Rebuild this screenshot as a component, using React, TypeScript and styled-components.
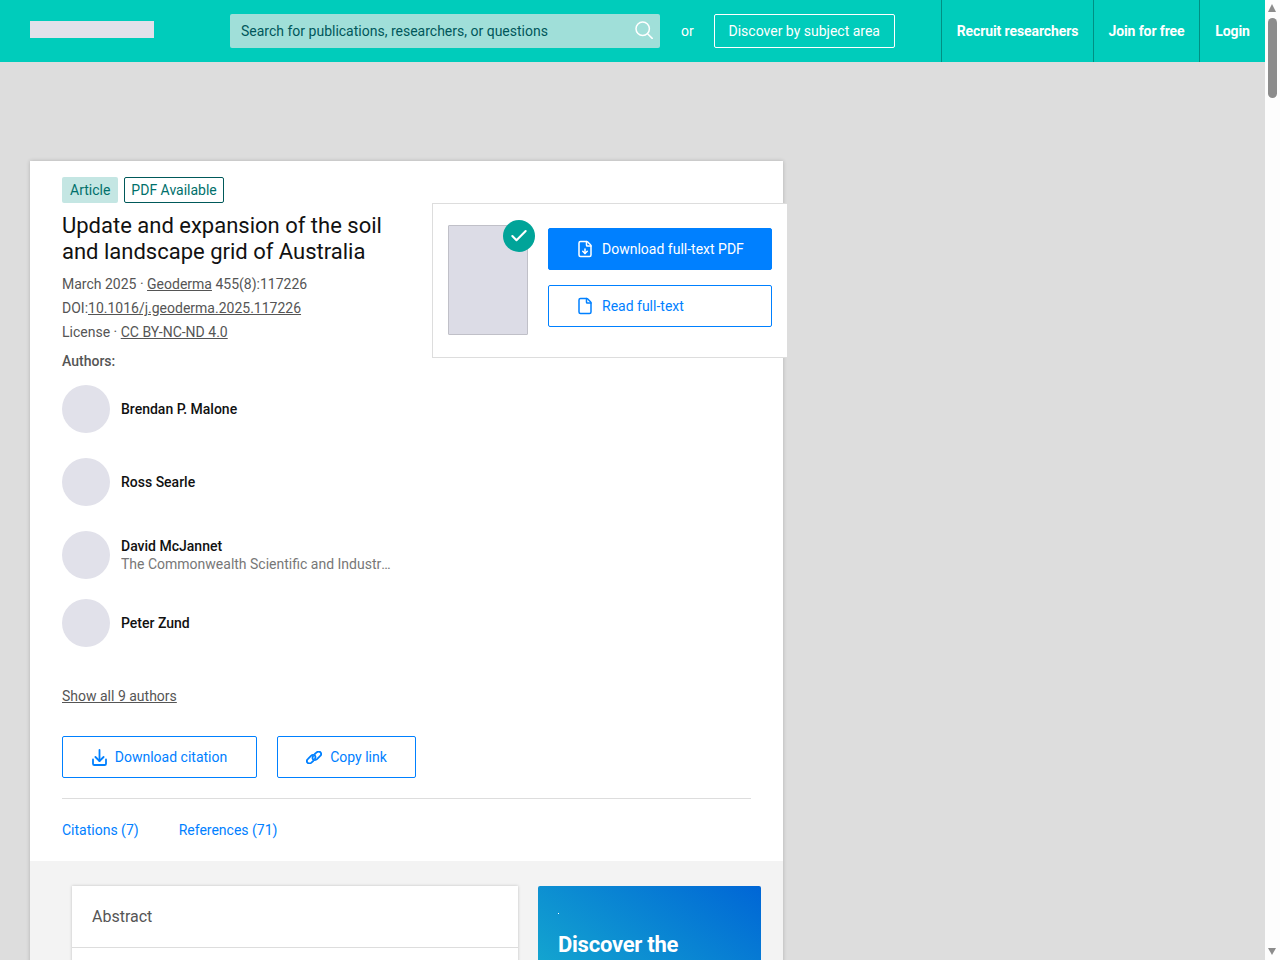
import React, { ReactElement } from 'react';
import styled, { createGlobalStyle } from 'styled-components';
import { Check, File, FileDown } from 'lucide-react';

const GlobalStyle = createGlobalStyle`
	html, body {
		margin: 0;
		padding: 0;
		background: #dddddd;
		font-family: Roboto, "Liberation Sans", sans-serif;
		font-size: 14px;
		color: #555555;
	}
	* {
		box-sizing: border-box;
	}
`;

const AUTHORS = [
	{ name: 'Brendan P. Malone', after: 25 },
	{ name: 'Ross Searle', after: 25 },
	{ name: 'David McJannet', org: 'The Commonwealth Scientific and Industrial Research Organisation', after: 20 },
	{ name: 'Peter Zund', after: 0 },
];

const SearchGlyph = (): ReactElement => (
	<svg width="18" height="18" viewBox="0 0 18 18" fill="none" stroke="#ffffff" strokeWidth="1.5" strokeLinecap="round">
		<circle cx="7.7" cy="7.7" r="6.7" />
		<path d="M12.6 12.8 17.2 17.4" />
	</svg>
);

const DownloadGlyph = (): ReactElement => (
	<svg width="15" height="17" viewBox="0 0 15 17" fill="none" stroke="currentColor" strokeWidth="1.8" strokeLinecap="round" strokeLinejoin="round">
		<path d="M7.5 1v11" />
		<path d="M3.4 8 7.5 12 11.6 8" />
		<path d="M1 10.5v4.2c0 .8.5 1.3 1.3 1.3h10.4c.8 0 1.3-.5 1.3-1.3v-4.2" />
	</svg>
);

const LinkChain = (): ReactElement => (
	<svg width="16" height="13" viewBox="0 0 16 13" fill="none" stroke="currentColor" strokeWidth="1.8" strokeLinecap="round">
		<path d="M7.2 10 5.4 11.6c-1.3 1-3 1-3.9 0-.9-1-.7-2.7.5-3.8l3-2.9c1.3-1.2 3-1.3 3.9-.3.7.8.7 2 .1 3" />
		<path d="M8.8 3 10.6 1.4c1.3-1 3-1 3.9 0 .9 1 .7 2.7-.5 3.8l-3 2.9c-1.3 1.2-3 1.3-3.9.3-.7-.8-.7-2-.1-3" />
	</svg>
);

export default function App(): ReactElement {
	return (
		<Page>
			<GlobalStyle />
			<TopBar>
				<LogoBlock />
				<SearchBox>
					<SearchText>Search for publications, researchers, or questions</SearchText>
					<SearchIconSlot>
						<SearchGlyph />
					</SearchIconSlot>
				</SearchBox>
				<OrLabel>or</OrLabel>
				<SubjectButton>Discover by subject area</SubjectButton>
				<NavLinks>
					<NavLink $width={152}>Recruit researchers</NavLink>
					<NavLink $width={106}>Join for free</NavLink>
					<NavLink $width={66}>Login</NavLink>
				</NavLinks>
			</TopBar>

			<Card>
				<CardHead>
					<TagRow>
						<ArticleTag>Article</ArticleTag>
						<PdfTag>PDF Available</PdfTag>
					</TagRow>
					<Title>Update and expansion of the soil and landscape grid of Australia</Title>
					<Meta>
						March 2025 · <MetaLink>Geoderma</MetaLink> 455(8):117226
					</Meta>
					<Meta>
						DOI:<MetaLink>10.1016/j.geoderma.2025.117226</MetaLink>
					</Meta>
					<Meta>
						License · <MetaLink>CC BY-NC-ND 4.0</MetaLink>
					</Meta>
					<AuthorsLabel>Authors:</AuthorsLabel>
					<AuthorList>
						{AUTHORS.map((a) => (
							<AuthorRow key={a.name} $after={a.after}>
								<Avatar />
								<AuthorInfo>
									<AuthorName>{a.name}</AuthorName>
									{a.org && <AuthorOrg>{a.org}</AuthorOrg>}
								</AuthorInfo>
							</AuthorRow>
						))}
					</AuthorList>
					<ShowAll>Show all 9 authors</ShowAll>
					<ActionRow>
						<OutlineButton $width={195}>
							<DownloadGlyph />
							Download citation
						</OutlineButton>
						<OutlineButton $width={139}>
							<LinkChain />
							Copy link
						</OutlineButton>
					</ActionRow>
					<Divider />
					<Tabs>
						<Tab>Citations (7)</Tab>
						<Tab>References (71)</Tab>
					</Tabs>
				</CardHead>

				<FloatBox>
					<Thumb>
						<CheckBadge>
							<Check size={20} strokeWidth={2.5} color="#ffffff" />
						</CheckBadge>
					</Thumb>
					<FloatActions>
						<PrimaryButton>
							<FileDown size={18} strokeWidth={2} />
							Download full-text PDF
						</PrimaryButton>
						<SecondaryButton>
							<File size={18} strokeWidth={2} />
							Read full-text
						</SecondaryButton>
					</FloatActions>
				</FloatBox>

				<CardBody>
					<AbstractCard>
						<AbstractHead>Abstract</AbstractHead>
					</AbstractCard>
					<Promo>
						<PromoDot />
						<PromoTitle>Discover the world's research</PromoTitle>
					</Promo>
				</CardBody>
			</Card>

			<ScrollRail>
				<ScrollUp />
				<ScrollThumb />
				<ScrollDown />
			</ScrollRail>
		</Page>
	);
}

const Page = styled.div`
	min-height: 960px;
	margin-right: 15px;
`;

const TopBar = styled.header`
	height: 62px;
	display: flex;
	align-items: center;
	padding-left: 30px;
	background: #00ccbb;
`;

const LogoBlock = styled.div`
	width: 124px;
	height: 17px;
	margin-bottom: 3px;
	background: #e1e1ea;
`;

const SearchBox = styled.div`
	width: 430px;
	height: 34px;
	margin-left: 76px;
	padding: 0 7px 0 11px;
	display: flex;
	align-items: center;
	justify-content: space-between;
	background: #a0dfd9;
	border-radius: 2px;
`;

const SearchText = styled.span`
	color: #00575b;
	font-size: 14px;
`;

const SearchIconSlot = styled.span`
	display: flex;
	margin-bottom: 2px;
`;

const OrLabel = styled.span`
	margin-left: 21px;
	color: #ffffff;
`;

const SubjectButton = styled.button`
	width: 181px;
	height: 34px;
	margin-left: 20px;
	padding: 0;
	background: transparent;
	border: 1px solid #ffffff;
	border-radius: 2px;
	color: #ffffff;
	font: 400 14px Roboto, sans-serif;
`;

const NavLinks = styled.nav`
	height: 62px;
	margin-left: auto;
	display: flex;
`;

const NavLink = styled.a<{ $width: number }>`
	width: ${({ $width }): number => $width}px;
	display: flex;
	align-items: center;
	justify-content: center;
	border-left: 1px solid #008f83;
	color: #ffffff;
	font-weight: 700;
	letter-spacing: -0.1px;
`;

const Card = styled.main`
	position: relative;
	width: 753px;
	margin: 99px 0 0 30px;
	background: #f3f3f3;
	box-shadow: 0 0 4px rgba(0, 0, 0, 0.2);
`;

const CardHead = styled.section`
	padding: 16px 32px 0;
	background: #ffffff;
`;

const TagRow = styled.div`
	display: flex;
	gap: 6px;
`;

const ArticleTag = styled.span`
	height: 26px;
	padding: 0 8px;
	display: flex;
	align-items: center;
	background: #c4e6e3;
	border-radius: 2px;
	color: #00706b;
`;

const PdfTag = styled(ArticleTag)`
	padding: 0 6px;
	background: #ffffff;
	border: 1px solid #00595a;
`;

const Title = styled.h1`
	width: 340px;
	margin: 10px 0 7px;
	color: #111111;
	font-size: 22px;
	font-weight: 400;
	line-height: 26px;
`;

const Meta = styled.div`
	height: 24px;
	line-height: 24px;
`;

const MetaLink = styled.a`
	text-decoration: underline;
`;

const AuthorsLabel = styled.div`
	margin-top: 5px;
	font-weight: 500;
	line-height: 24px;
`;

const AuthorList = styled.div`
	margin-top: 12px;
`;

const AuthorRow = styled.div<{ $after: number }>`
	display: flex;
	align-items: center;
	gap: 11px;
	margin-bottom: ${({ $after }): number => $after}px;
`;

const Avatar = styled.div`
	width: 48px;
	height: 48px;
	border-radius: 50%;
	background: #e1e1ea;
`;

const AuthorInfo = styled.div`
	width: 270px;
	line-height: 18px;
`;

const AuthorName = styled.div`
	color: #111111;
	font-weight: 500;
`;

const AuthorOrg = styled.div`
	overflow: hidden;
	color: #777777;
	white-space: nowrap;
	text-overflow: ellipsis;
`;

const ShowAll = styled.a`
	display: block;
	margin-top: 40px;
	line-height: 18px;
	text-decoration: underline;
`;

const ActionRow = styled.div`
	display: flex;
	gap: 20px;
	margin-top: 31px;
`;

const OutlineButton = styled.button<{ $width: number }>`
	width: ${({ $width }): number => $width}px;
	height: 42px;
	padding: 0;
	display: flex;
	align-items: center;
	justify-content: center;
	gap: 8px;
	background: #ffffff;
	border: 1px solid #0080ff;
	border-radius: 2px;
	color: #0080ff;
	font: 400 14px Roboto, sans-serif;
`;

const Divider = styled.hr`
	height: 1px;
	margin: 20px 0 0;
	background: #dddddd;
	border: 0;
`;

const Tabs = styled.div`
	position: relative;
	z-index: 1;
	height: 62px;
	margin: 0 17px -2px -20px;
	padding: 22px 0 0 20px;
	display: flex;
	gap: 40px;
	background: #ffffff;
`;

const Tab = styled.a`
	color: #0080ff;
	line-height: 18px;
`;

const FloatBox = styled.aside`
	position: absolute;
	top: 42px;
	left: 402px;
	width: 356px;
	height: 155px;
	padding: 21px 15px 0;
	display: flex;
	gap: 20px;
	background: #ffffff;
	border: 1px solid #dddddd;
`;

const Thumb = styled.div`
	position: relative;
	width: 81px;
	height: 110px;
	background: #dcdce6;
	border: 1px solid #c0c0c8;
	border-radius: 1px;
`;

const CheckBadge = styled.span`
	position: absolute;
	top: -6px;
	right: -8px;
	width: 32px;
	height: 32px;
	display: flex;
	align-items: center;
	justify-content: center;
	background: #00a499;
	border-radius: 50%;
`;

const FloatActions = styled.div`
	padding-top: 3px;
	display: flex;
	flex-direction: column;
	gap: 15px;
`;

const PrimaryButton = styled.button`
	width: 224px;
	height: 42px;
	padding: 0 0 0 27px;
	display: flex;
	align-items: center;
	gap: 8px;
	background: #0080ff;
	border: 1px solid #0080ff;
	border-radius: 2px;
	color: #ffffff;
	font: 400 14px Roboto, sans-serif;
`;

const SecondaryButton = styled(PrimaryButton)`
	background: #ffffff;
	color: #0080ff;
`;

const CardBody = styled.section`
	height: 400px;
	padding: 27px 22px 0 42px;
	display: flex;
	gap: 20px;
`;

const AbstractCard = styled.article`
	width: 446px;
	height: 300px;
	background: #ffffff;
	box-shadow: 0 0 3px rgba(0, 0, 0, 0.2);
`;

const AbstractHead = styled.h2`
	height: 62px;
	margin: 0;
	padding-left: 20px;
	display: flex;
	align-items: center;
	border-bottom: 1px solid #dddddd;
	font-size: 16px;
	font-weight: 400;
`;

const Promo = styled.article`
	width: 223px;
	height: 300px;
	padding: 27px 20px 0;
	background: linear-gradient(215deg, #0066d6 0, #14a6cf 195px);
	border-radius: 2px;
`;

const PromoDot = styled.div`
	width: 1px;
	height: 1px;
	background: #ffffff;
`;

const PromoTitle = styled.h3`
	margin: 18px 0 0;
	color: #ffffff;
	font-size: 22px;
	font-weight: 700;
	letter-spacing: -0.25px;
	line-height: 25px;
`;

const ScrollRail = styled.div`
	position: fixed;
	top: 0;
	right: 0;
	bottom: 0;
	width: 15px;
	background: #fdfdfd;
`;

const ScrollThumb = styled.div`
	position: absolute;
	top: 18px;
	left: 3px;
	width: 9px;
	height: 80px;
	background: #8c8c8c;
	border-radius: 5px;
`;

const ScrollUp = styled.div`
	position: absolute;
	top: 4px;
	left: 3px;
	border-left: 4.5px solid transparent;
	border-right: 4.5px solid transparent;
	border-bottom: 8px solid #8c8c8c;
`;

const ScrollDown = styled.div`
	position: absolute;
	bottom: 5px;
	left: 3px;
	border-left: 4.5px solid transparent;
	border-right: 4.5px solid transparent;
	border-top: 7px solid #8c8c8c;
`;
